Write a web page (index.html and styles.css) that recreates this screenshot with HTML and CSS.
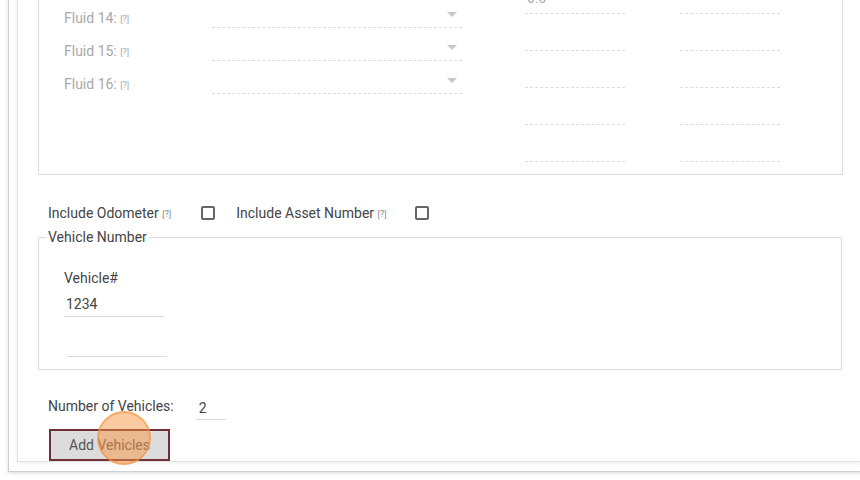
FILE: index.html
```html
<!DOCTYPE html>
<html lang="en">
<head>
	<meta charset="UTF-8" />
	<title>Add Vehicles</title>
	<link rel="stylesheet" href="styles.css">
</head>
<body>
	<div class="panel">
		<div class="panel-inner">
			<div class="fluids">
				<div class="fluid-list">
					<div class="fluid-row"><span class="fluid-label">Fluid 14: <span class="help">[?]</span></span><div class="select"><span class="arrow"></span></div></div>
					<div class="fluid-row"><span class="fluid-label">Fluid 15: <span class="help">[?]</span></span><div class="select"><span class="arrow"></span></div></div>
					<div class="fluid-row"><span class="fluid-label">Fluid 16: <span class="help">[?]</span></span><div class="select"><span class="arrow"></span></div></div>
				</div>
				<div class="amounts">
					<div class="amount-col">
						<div class="amount"></div>
						<div class="amount">0.0</div>
						<div class="amount"></div>
						<div class="amount"></div>
						<div class="amount"></div>
						<div class="amount"></div>
					</div>
					<div class="amount-col">
						<div class="amount"></div>
						<div class="amount"></div>
						<div class="amount"></div>
						<div class="amount"></div>
						<div class="amount"></div>
						<div class="amount"></div>
					</div>
				</div>
			</div>

			<div class="options">
				<span class="option-label">Include Odometer <span class="help">[?]</span></span>
				<span class="checkbox odometer"></span>
				<span class="option-label">Include Asset Number <span class="help">[?]</span></span>
				<span class="checkbox asset"></span>
			</div>

			<fieldset class="vehicles">
				<legend>Vehicle Number</legend>
				<div class="vehicle-body">
					<div class="vehicle-label">Vehicle#</div>
					<input class="vehicle-input" type="text" value="1234">
					<input class="vehicle-input extra" type="text" value="">
				</div>
			</fieldset>

			<div class="count-row">
				<span class="count-label">Number of Vehicles:</span>
				<input class="count-input" type="text" value="2">
			</div>

			<div class="actions">
				<button class="add-btn">Add Vehicles</button>
				<span class="click-dot"></span>
			</div>
		</div>
	</div>
</body>
</html>
```

FILE: styles.css
```css
html,body{
	margin:0;
	padding:0;
	background:#fff;
	overflow:hidden;
}
body{
	font-family:Roboto,"Liberation Sans",Arial,sans-serif;
	font-size:14px;
	color:#444;
	height:480px;
}
.panel{
	margin:-91px 0 0 8px;
	width:870px;
	border:1px solid #cfcfcf;
	box-shadow:0 1px 4px rgba(0,0,0,0.15);
	padding:8px 0 9px 8px;
	background:#fff;
}
.panel-inner{
	border:1px solid #e2e2e2;
	box-shadow:0 2px 5px rgba(0,0,0,0.06);
	padding:10px 0 0 20px;
	width:823px;
}
.help{
	font-size:9px;
	color:#888;
	vertical-align:middle;
}

/* fluids */
.fluids{
	display:flex;
	width:778px;
	border:1px solid #ddd;
	padding:10px 0 12px 25px;
}
.fluid-list{
	padding-top:55px;
	width:398px;
}
.fluid-row{
	display:flex;
	align-items:flex-end;
	height:33px;
}
.fluid-label{
	width:148px;
	color:#a8a8a8;
	line-height:16px;
	padding-bottom:1px;
}
.fluid-label .help{
	color:#aaa;
}
.select{
	position:relative;
	width:250px;
	height:33px;
	box-sizing:border-box;
	border-bottom:1px dashed #dcdcdc;
}
.arrow{
	position:absolute;
	right:5px;
	top:17px;
	width:0;
	height:0;
	border-top:5px solid #c8c8c8;
	border-left:5px solid transparent;
	border-right:5px solid transparent;
}
.amounts{
	display:flex;
	gap:55px;
	margin-left:63px;
}
.amount{
	display:flex;
	align-items:flex-end;
	width:100px;
	height:37px;
	box-sizing:border-box;
	border-bottom:1px dashed #dcdcdc;
	padding:0 0 7px 2px;
	color:#aaa;
	line-height:16px;
}

/* options */
.options{
	display:flex;
	align-items:center;
	height:20px;
	margin:28px 0 0 10px;
}
.checkbox{
	width:14px;
	height:14px;
	box-sizing:border-box;
	border:2px solid #666;
	border-radius:2px;
}
.checkbox.odometer{
	margin:0 21px 0 30px;
}
.checkbox.asset{
	margin-left:28px;
}

/* vehicle number */
.vehicles{
	width:804px;
	box-sizing:border-box;
	margin:4px 0 0;
	border:1px solid #ddd;
	padding:21px 0 12px 0;
}
.vehicles legend{
	margin-left:7px;
	padding:0 2px;
	line-height:20px;
	color:#444;
}
.vehicle-body{
	padding-left:25px;
}
.vehicle-label{
	line-height:20px;
	margin-bottom:3px;
}
input{
	font-family:inherit;
	font-size:14px;
	color:#444;
	outline:none;
}
.vehicle-input{
	display:block;
	width:100px;
	height:26px;
	box-sizing:border-box;
	border:0;
	border-bottom:1px solid #dadada;
	padding:0 2px;
	background:transparent;
}
.vehicle-input.extra{
	margin:13px 0 0 3px;
	height:27px;
}

/* count + button */
.count-row{
	display:flex;
	align-items:flex-start;
	margin:26px 0 0 10px;
}
.count-label{
	line-height:20px;
}
.count-input{
	width:30px;
	height:24px;
	box-sizing:border-box;
	border:0;
	border-bottom:1px solid #dadada;
	padding:0 3px;
	margin-left:22px;
	background:transparent;
}
.actions{
	position:relative;
	margin:9px 0 0 11px;
	height:32px;
}
.add-btn{
	width:121px;
	height:32px;
	box-sizing:border-box;
	background:#dcdcdc;
	border:2px solid #6e3036;
	font-family:inherit;
	font-size:14px;
	color:#555;
	padding:0;
}
.click-dot{
	position:absolute;
	left:48px;
	top:-18px;
	width:54px;
	height:54px;
	box-sizing:border-box;
	border-radius:50%;
	background:rgba(247,150,66,0.5);
	border:2px solid rgba(243,145,60,0.55);
}
```
